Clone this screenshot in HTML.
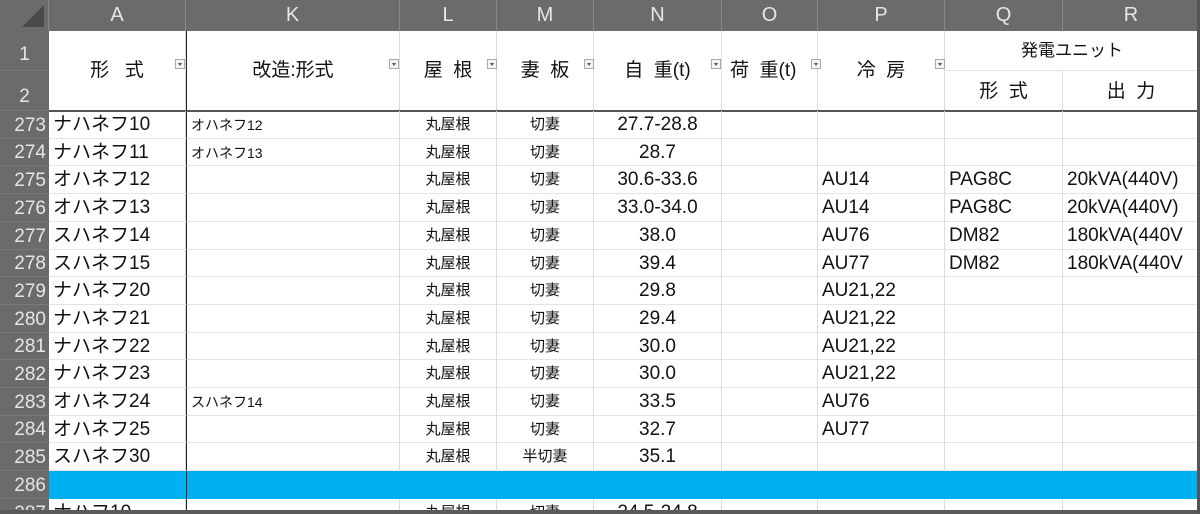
<!DOCTYPE html>
<html><head><meta charset="utf-8"><style>
*{margin:0;padding:0;box-sizing:border-box}
html,body{width:1200px;height:514px;overflow:hidden}
body{background:#fff;position:relative;font-family:"Liberation Sans","Noto Sans CJK JP",sans-serif;color:#111}
.hd{position:absolute;top:0;height:31px;background:#6b6b6b;color:#e6e6e6;font-size:20px;text-align:center;line-height:31px;border-right:1px solid #888}
.rh{position:absolute;left:0;width:49px;background:#6b6b6b;color:#e6e6e6;font-size:19px;text-align:right;padding-right:3px;border-bottom:1px solid #7a7a7a}
.c{position:absolute;white-space:nowrap;overflow:hidden;border-right:1px solid #dcdcdc;border-bottom:1px solid #e4e4e4;font-size:18px;line-height:28px}
.a{font-size:19px}
.k{font-size:14px}
.s{font-size:15px;text-align:center}
.n{text-align:center;font-size:19px}
.h{position:absolute;background:#fff;border-right:1px solid #dcdcdc;font-size:19px;text-align:center;white-space:nowrap}
.dd{position:absolute;width:10px;height:10px;border:1px solid #aaa;background:#f4f4f4}
.dd:after{content:"";position:absolute;left:2px;top:3px;border:2px solid transparent;border-top:3px solid #555}
</style></head><body>
<div class="hd" style="left:0;width:49px;background:#6b6b6b"><div style="position:absolute;right:4px;bottom:4px;width:0;height:0;border-left:22px solid transparent;border-bottom:22px solid #4a4a4a"></div></div>
<div class="hd" style="left:49px;width:137px">A</div>
<div class="hd" style="left:186px;width:214px">K</div>
<div class="hd" style="left:400px;width:97px">L</div>
<div class="hd" style="left:497px;width:97px">M</div>
<div class="hd" style="left:594px;width:128px">N</div>
<div class="hd" style="left:722px;width:96px">O</div>
<div class="hd" style="left:818px;width:127px">P</div>
<div class="hd" style="left:945px;width:118px">Q</div>
<div class="hd" style="left:1063px;width:137px">R</div>
<div class="rh" style="top:31px;height:40px;line-height:48px;text-align:center;padding:0">1</div>
<div class="rh" style="top:71px;height:40px;line-height:52px;text-align:center;padding:0">2</div>
<div class="h" style="left:49px;top:31px;width:137px;height:80px;line-height:80px">形&nbsp;&nbsp; 式</div>
<div class="h" style="left:186px;top:31px;width:214px;height:80px;line-height:80px;border-left:1px solid #222">改造:形式</div>
<div class="h" style="left:400px;top:31px;width:97px;height:80px;line-height:80px">屋&nbsp; 根</div>
<div class="h" style="left:497px;top:31px;width:97px;height:80px;line-height:80px">妻&nbsp; 板</div>
<div class="h" style="left:594px;top:31px;width:128px;height:80px;line-height:80px">自&nbsp; 重(t)</div>
<div class="h" style="left:722px;top:31px;width:96px;height:80px;line-height:80px;text-align:left;padding-left:8px">荷&nbsp; 重(t)</div>
<div class="h" style="left:818px;top:31px;width:127px;height:80px;line-height:80px">冷&nbsp; 房</div>
<div class="h" style="left:945px;top:31px;width:255px;height:40px;line-height:40px;font-size:17px;border-bottom:1px solid #e4e4e4">発電ユニット</div>
<div class="h" style="left:945px;top:71px;width:118px;height:40px;line-height:42px">形&nbsp; 式</div>
<div class="h" style="left:1063px;top:71px;width:137px;height:40px;line-height:42px">出&nbsp; 力</div>
<div class="dd" style="left:175px;top:59px"></div>
<div class="dd" style="left:389px;top:59px"></div>
<div class="dd" style="left:487px;top:59px"></div>
<div class="dd" style="left:584px;top:59px"></div>
<div class="dd" style="left:711px;top:59px"></div>
<div class="dd" style="left:811px;top:59px"></div>
<div class="dd" style="left:935px;top:59px"></div>
<div style="position:absolute;left:49px;top:110px;width:1151px;height:2px;background:#555"></div>
<div id="rows"></div>
<div style="position:absolute;left:0;top:510px;width:1200px;height:4px;background:#5a5a5a"></div>
<div style="position:absolute;left:1197px;top:0;width:3px;height:514px;background:#555"></div>
<script>
var cols=[[49,137],[186,214],[400,97],[497,97],[594,128],[722,96],[818,127],[945,118],[1063,137]];
var d=[
["273","ナハネフ10","オハネフ12","丸屋根","切妻","27.7-28.8","","","",""],
["274","ナハネフ11","オハネフ13","丸屋根","切妻","28.7","","","",""],
["275","オハネフ12","","丸屋根","切妻","30.6-33.6","","AU14","PAG8C","20kVA(440V)"],
["276","オハネフ13","","丸屋根","切妻","33.0-34.0","","AU14","PAG8C","20kVA(440V)"],
["277","スハネフ14","","丸屋根","切妻","38.0","","AU76","DM82","180kVA(440V"],
["278","スハネフ15","","丸屋根","切妻","39.4","","AU77","DM82","180kVA(440V"],
["279","ナハネフ20","","丸屋根","切妻","29.8","","AU21,22","",""],
["280","ナハネフ21","","丸屋根","切妻","29.4","","AU21,22","",""],
["281","ナハネフ22","","丸屋根","切妻","30.0","","AU21,22","",""],
["282","ナハネフ23","","丸屋根","切妻","30.0","","AU21,22","",""],
["283","オハネフ24","スハネフ14","丸屋根","切妻","33.5","","AU76","",""],
["284","オハネフ25","","丸屋根","切妻","32.7","","AU77","",""],
["285","スハネフ30","","丸屋根","半切妻","35.1","","","",""],
["286","","","","","","","","",""],
["287","ナハフ10","","丸屋根","切妻","24.5-24.8","","","",""]];
var h="";
d.forEach(function(r,i){
 var t=Math.round(111+i*27.7);var t2=Math.round(111+(i+1)*27.7);var hh=t2-t;var blue=r[0]=="286";
 h+='<div class="rh" style="top:'+t+'px;height:'+hh+'px;line-height:'+(hh+1)+'px">'+r[0]+'</div>';
 cols.forEach(function(c,j){
  var cls="c"+(j==0?" a":"")+(j==1?" k":"")+(j==2||j==3?" s":"")+(j==4?" n":"")+(j>=6?" a":"");
  var st="left:"+c[0]+"px;top:"+t+"px;width:"+c[1]+"px;height:"+hh+"px;";
  if(j==0||j>=6)st+="padding-left:4px;";
  if(j==1)st+="padding-left:4px;border-left:1px solid #222;";
  if(blue)st+="background:#00b0f0;border-right-color:#00b0f0;border-bottom-color:#00b0f0;";
  h+='<div class="'+cls+'" style="'+st+'">'+(r[j+1]||"")+'</div>';
 });
});
document.getElementById("rows").innerHTML=h;
</script>
</body></html>
